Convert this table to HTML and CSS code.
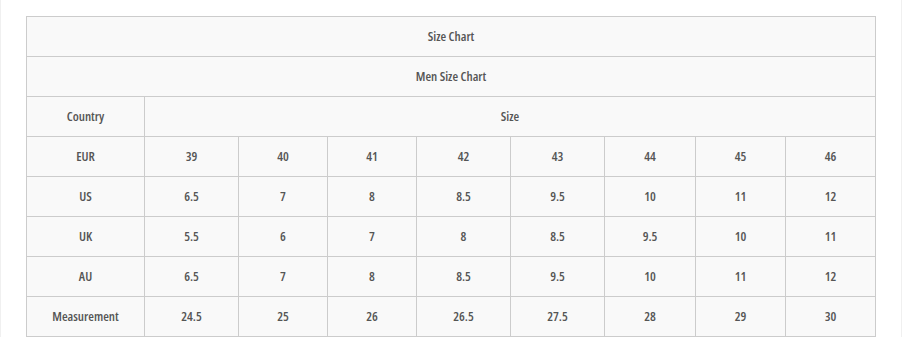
FILE: index.html
```html
<!DOCTYPE html>
<html>
<head>
<meta charset="utf-8">
<link rel="stylesheet" href="styles.css">
</head>
<body>
<div class="page">
  <table class="chart">
    <colgroup>
      <col class="c0"><col class="c1"><col class="c2"><col class="c3"><col class="c4"><col class="c5"><col class="c6"><col class="c7"><col class="c8">
    </colgroup>
    <tbody>
      <tr><td colspan="9">Size Chart</td></tr>
      <tr><td colspan="9">Men Size Chart</td></tr>
      <tr><td>Country</td><td colspan="8">Size</td></tr>
      <tr><td>EUR</td><td>39</td><td>40</td><td>41</td><td>42</td><td>43</td><td>44</td><td>45</td><td>46</td></tr>
      <tr><td>US</td><td>6.5</td><td>7</td><td>8</td><td>8.5</td><td>9.5</td><td>10</td><td>11</td><td>12</td></tr>
      <tr><td>UK</td><td>5.5</td><td>6</td><td>7</td><td>8</td><td>8.5</td><td>9.5</td><td>10</td><td>11</td></tr>
      <tr><td>AU</td><td>6.5</td><td>7</td><td>8</td><td>8.5</td><td>9.5</td><td>10</td><td>11</td><td>12</td></tr>
      <tr><td>Measurement</td><td>24.5</td><td>25</td><td>26</td><td>26.5</td><td>27.5</td><td>28</td><td>29</td><td>30</td></tr>
    </tbody>
  </table>
</div>
</body>
</html>
```
FILE: styles.css
```css
html, body {
  margin: 0;
  padding: 0;
  background: #fff;
}
.page {
  box-sizing: border-box;
  width: 902px;
  height: 337px;
  border-left: 1px solid #f0f0f0;
  border-right: 1px solid #f0f0f0;
  padding: 16px 0 0 25px;
  overflow: hidden;
}
.chart {
  border-collapse: collapse;
  table-layout: fixed;
  width: 850px;
  font-family: "Open Sans", "Lato", sans-serif;
  font-size: 13px;
  font-weight: 600;
  font-stretch: 82%;
  color: #555;
}
.chart td {
  border: 1px solid #cccccc;
  background: #f9f9f9;
  text-align: center;
  vertical-align: middle;
  height: 40px;
  padding: 0 0 1px;
  box-sizing: border-box;
}
.c0 { width: 118px; }
.c1 { width: 94px; }
.c2 { width: 89px; }
.c3 { width: 89px; }
.c4 { width: 94px; }
.c5 { width: 94px; }
.c6 { width: 91px; }
.c7 { width: 90px; }
.c8 { width: 90px; }
```
